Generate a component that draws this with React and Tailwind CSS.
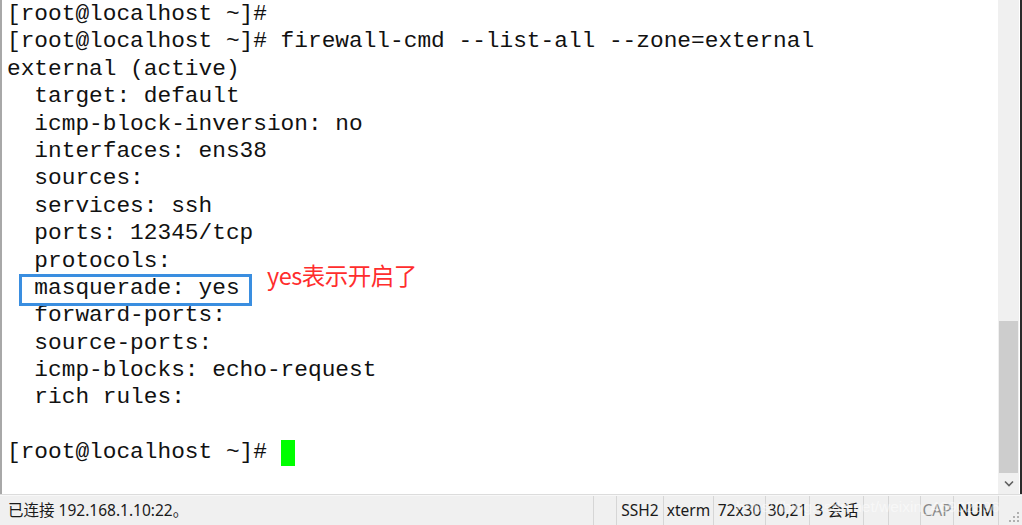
import React from "react";

const lines = [
  "[root@localhost ~]#",
  "[root@localhost ~]# firewall-cmd --list-all --zone=external",
  "external (active)",
  "  target: default",
  "  icmp-block-inversion: no",
  "  interfaces: ens38",
  "  sources:",
  "  services: ssh",
  "  ports: 12345/tcp",
  "  protocols:",
  "  masquerade: yes",
  "  forward-ports:",
  "  source-ports:",
  "  icmp-blocks: echo-request",
  "  rich rules:",
  "",
];

export default function App() {
  return (
    <div className="w-[1022px] h-[525px] flex flex-col bg-white overflow-hidden">
      {/* terminal + scrollbar */}
      <div className="flex h-[495px] border-b border-[#dcdcdc]">
        <div className="relative flex-1 border-l-2 border-[#a8a8a8] pl-[5px] pt-[1px] font-['Liberation_Mono',monospace] text-[22.8px] leading-[27.4px] text-[#111] whitespace-pre">
          {lines.map((l, i) => (
            <div key={i} className="h-[27.4px]">
              {l}
            </div>
          ))}
          <div className="flex items-center h-[27.4px]">
            <span>[root@localhost ~]# </span>
            <span className="inline-block w-[14px] h-[26px] bg-[#00ff00]" />
          </div>

          {/* annotation */}
          <div className="absolute left-[17px] top-[274px] w-[233px] h-[32px] border-[3px] border-[#3a8ee0]" />
          <div className="absolute left-[265px] top-[259px] text-[23.5px] leading-[32px] text-[#ff2d2d] font-['Noto_Sans_CJK_SC',sans-serif] tracking-[-0.5px]">
            yes表示开启了
          </div>
        </div>
        <div className="w-[24px] flex">
          <div className="w-[21px] bg-[#f0f0f0] flex flex-col pl-[1px] pr-[1px]">
            <div className="h-[321px]" />
            <div className="h-[152px] bg-[#cdcdcd]" />
            <div className="flex-1 flex items-center justify-center">
              <svg width="10" height="7" viewBox="0 0 10 7">
                <path d="M1 1.5 L5 5.5 L9 1.5" stroke="#606060" strokeWidth="1.6" fill="none" />
              </svg>
            </div>
          </div>
          <div className="w-[1px] bg-white" />
          <div className="w-[2px] bg-[#2a2a2a]" />
        </div>
      </div>

      {/* status bar */}
      <div className="relative flex-1 flex items-center bg-[#f0f0f0] border-t border-[#f8f8f8] text-[15.5px] text-[#1a1a1a] font-['Noto_Sans','Noto_Sans_CJK_SC',sans-serif] whitespace-nowrap">
        <div className="w-[593px] pl-[8px]">已连接 192.168.1.10:22。</div>
        <div className="w-[23px] h-full border-l border-[#d6d6d6]" />
        <div className="w-[47px] h-full border-l border-[#d6d6d6] flex items-center justify-center">SSH2</div>
        <div className="w-[50px] h-full border-l border-[#d6d6d6] flex items-center justify-center">xterm</div>
        <div className="w-[52px] h-full border-l border-[#d6d6d6] flex items-center justify-center">72x30</div>
        <div className="w-[44px] h-full border-l border-[#d6d6d6] flex items-center justify-center">30,21</div>
        <div className="w-[54px] h-full border-l border-[#d6d6d6] flex items-center justify-center">3 会话</div>
        <div className="w-[25px] h-full border-l border-[#d6d6d6]" />
        <div className="w-[32px] h-full border-l border-[#d6d6d6]" />
        <div className="w-[33px] h-full border-l border-[#d6d6d6] flex items-center justify-center text-[#8a8a8a]">CAP</div>
        <div className="w-[45px] h-full border-l border-[#d6d6d6] flex items-center justify-center">NUM</div>
        <div className="flex-1 h-full border-l border-[#d6d6d6] flex items-end justify-end pr-[3px] pb-[3px]">
          <svg width="10" height="10" viewBox="0 0 10 10">
            <g fill="#b0b0b0">
              <rect x="8" y="0" width="2" height="2" />
              <rect x="4" y="4" width="2" height="2" />
              <rect x="8" y="4" width="2" height="2" />
              <rect x="0" y="8" width="2" height="2" />
              <rect x="4" y="8" width="2" height="2" />
              <rect x="8" y="8" width="2" height="2" />
            </g>
          </svg>
        </div>
        <div className="absolute left-[736px] top-[1px] text-[15.5px] leading-[20px] text-white/50 font-['Liberation_Sans',sans-serif] pointer-events-none">
          https://blog.csdn.net/weixin_46902396
        </div>
      </div>
    </div>
  );
}
